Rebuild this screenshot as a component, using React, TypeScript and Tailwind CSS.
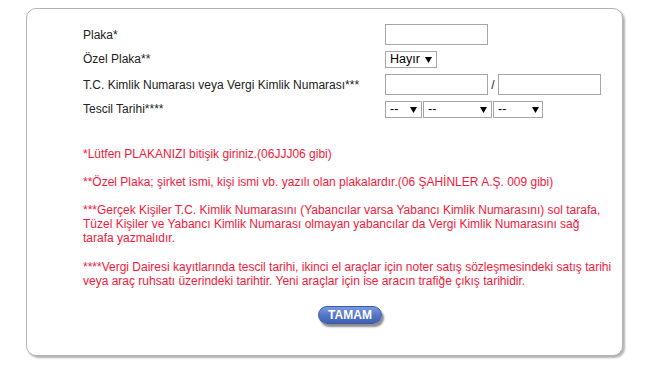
import React from "react";

function Sel({ w, label, arrowLeft }: { w: string; label: string; arrowLeft: number }) {
  return (
    <div className={`relative h-[17px] ${w} border border-[#a6a6a6] bg-white`}>
      <div className="pl-[4px] leading-[15px] text-[12.5px] text-black">{label}</div>
      <svg
        width="7"
        height="6"
        viewBox="0 0 7 6"
        className="pointer-events-none absolute top-[5px]"
        style={{ left: arrowLeft }}
      >
        <path d="M0 0 H7 L3.5 6 Z" fill="#000" />
      </svg>
    </div>
  );
}

export default function App() {
  const red = "text-[#f5193a]";
  return (
    <div className="w-[659px] h-[368px] bg-white pt-[8px] pl-[26px]" style={{ fontFamily: '"Liberation Sans", Arial, sans-serif' }}>
      <div className="w-[597px] h-[348px] border border-[#b4b4b4] rounded-[10px] shadow-[2px_2px_2px_rgba(0,0,0,0.3)] bg-white pl-[56px] pt-[15px]">
        <div className="flex flex-col text-[12px] text-[#222]">
          <div className="flex items-center h-[21px]">
            <div className="w-[302px]">Plaka*</div>
            <div className="w-[103px] h-[21px] border border-[#a6a6a6]" />
          </div>
          <div className="flex items-center h-[18px] mt-[5px]">
            <div className="w-[302px]">Özel Plaka**</div>
            <Sel w="w-[52px]" label="Hayır" arrowLeft={39} />
          </div>
          <div className="flex items-center h-[21px] mt-[6px]">
            <div className="w-[302px]">T.C. Kimlik Numarası veya Vergi Kimlik Numarası***</div>
            <div className="w-[103px] h-[21px] border border-[#a6a6a6]" />
            <span className="w-[10px] text-center">/</span>
            <div className="w-[103px] h-[21px] border border-[#a6a6a6]" />
          </div>
          <div className="flex items-center h-[18px] mt-[5px]">
            <div className="w-[302px]">Tescil Tarihi****</div>
            <div className="flex gap-[1px]">
              <Sel w="w-[37px]" label="--" arrowLeft={24} />
              <Sel w="w-[69px]" label="--" arrowLeft={56} />
              <Sel w="w-[50px]" label="--" arrowLeft={38} />
            </div>
          </div>
        </div>

        <div className={`mt-[29px] text-[12px] leading-[14px] ${red} whitespace-nowrap`}>
          <p>*Lütfen PLAKANIZI bitişik giriniz.(06JJJ06 gibi)</p>
          <p className="mt-[14px]">**Özel Plaka; şirket ismi, kişi ismi vb. yazılı olan plakalardır.(06 ŞAHİNLER A.Ş. 009 gibi)</p>
          <p className="mt-[14px]">
            ***Gerçek Kişiler T.C. Kimlik Numarasını (Yabancılar varsa Yabancı Kimlik Numarasını) sol tarafa,
            <br />
            Tüzel Kişiler ve Yabancı Kimlik Numarası olmayan yabancılar da Vergi Kimlik Numarasını sağ
            <br />
            tarafa yazmalıdır.
          </p>
          <p className="mt-[15px]">
            ****Vergi Dairesi kayıtlarında tescil tarihi, ikinci el araçlar için noter satış sözleşmesindeki satış tarihi
            <br />
            veya araç ruhsatı üzerindeki tarihtir. Yeni araçlar için ise aracın trafiğe çıkış tarihidir.
          </p>
        </div>

        <div className="flex pl-[235px] mt-[18px]">
          <button className="h-[18px] w-[64px] rounded-full border border-[#3b5aa6] bg-gradient-to-b from-[#7a9ae0] via-[#5577c8] to-[#3f61b5] text-white font-bold text-[12px] leading-[16px] shadow-[2px_3px_2px_rgba(0,0,0,0.45)]">
            TAMAM
          </button>
        </div>
      </div>
    </div>
  );
}
